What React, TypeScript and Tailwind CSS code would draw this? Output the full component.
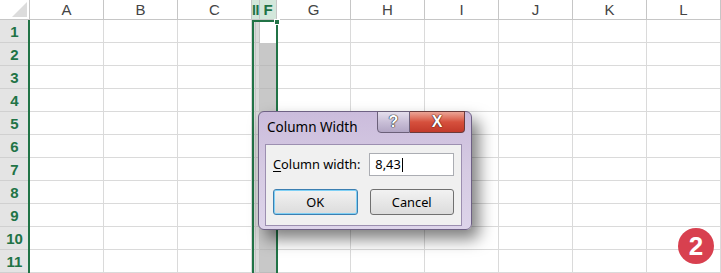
import React from "react";

const COLS = ["", "A", "B", "C", "D", "E", "F", "G", "H", "I", "J", "K", "L"];
const ROWS = [1, 2, 3, 4, 5, 6, 7, 8, 9, 10, 11];

function HeaderRow() {
  return (
    <>
      <div className="relative bg-white border-r border-b border-[#c6c6c6]">
        <svg className="absolute right-[2px] bottom-[2px]" width="15" height="15" viewBox="0 0 15 15">
          <polygon points="15,0 15,15 0,15" fill="#dcdcdc" />
        </svg>
      </div>
      {COLS.slice(1).map((c, i) => {
        if (c === "D") {
          return (
            <div
              key={c}
              className="col-span-2 flex items-center justify-center bg-[#d3e7db] border-r border-b border-[#c6c6c6] text-[#217346] font-bold text-[14px] leading-none"
            >
              <span className="tracking-[-0.5px] whitespace-nowrap">II</span>
            </div>
          );
        }
        if (c === "E") return null;
        if (c === "F") {
          return (
            <div
              key={c}
              className="flex items-center justify-center bg-[#d3e7db] border-r border-b border-[#c6c6c6] text-[#217346] font-bold text-[15px] leading-none"
            >
              F
            </div>
          );
        }
        return (
          <div
            key={c + i}
            className="flex items-center justify-center bg-white border-r border-b border-[#c6c6c6] text-[#444444] text-[15px] leading-none"
          >
            {c}
          </div>
        );
      })}
    </>
  );
}

function BodyRow({ r }: { r: number }) {
  return (
    <>
      <div className="flex items-center justify-center bg-[#e4e4e4] border-r border-b border-[#d0d0d0] text-[#217346] font-bold text-[15px] leading-none">
        {r}
      </div>
      {COLS.slice(1).map((c) => {
        let cls = "border-r border-b border-[#dadada] bg-white";
        if (c === "D" || c === "E") cls = "border-r border-b border-[#c4c4c4] bg-[#d9d9d9]";
        if (c === "F") cls = r === 1 ? "border-b border-white bg-white" : "border-r border-b border-[#bcbcbc] bg-[#c8c8c8]";
        return <div key={c} className={cls} />;
      })}
    </>
  );
}

function Dialog() {
  return (
    <div className="absolute left-[258px] top-[111px] w-[214px] h-[119px] rounded-[6px] border border-[#6e6184] bg-gradient-to-b from-[#cbbcdc] via-[#d6cbe3] to-[#ddd4ea] shadow-[7px_9px_16px_rgba(0,0,0,0.5)] flex flex-col">
      <div className="relative h-[32px] shrink-0 flex items-start">
        <div className="pl-[8px] pt-[9px] text-[13.5px] leading-none text-black font-['Noto_Sans',sans-serif]">
          Column Width
        </div>
        <div className="absolute left-[118px] top-[-1px] flex">
          <div className="w-[33px] h-[22px] rounded-bl-[4px] border border-[#6b6079] bg-gradient-to-b from-[#e4deec] via-[#c9bfd7] to-[#b2a6c4] flex items-center justify-center">
            <span className="text-white font-bold text-[16px] leading-none font-['Liberation_Sans',sans-serif] [text-shadow:0_0_1px_#222,0_0_1px_#222,0_0_1px_#222]">?</span>
          </div>
          <div className="w-[55px] h-[22px] rounded-br-[4px] border border-l-0 border-[#6b3a3a] bg-gradient-to-b from-[#eaa496] via-[#d6503d] to-[#c2392a] flex items-center justify-center">
            <span className="text-white font-bold text-[16px] leading-none font-['Liberation_Sans',sans-serif] [text-shadow:0_0_1px_#4a1a14,0_0_1px_#4a1a14,0_0_1px_#4a1a14]">X</span>
          </div>
        </div>
      </div>
      <div className="ml-[6px] mr-[9px] h-[82px] border border-[#9c8fb0] bg-[#f0f0f0] flex flex-col px-[7px] pt-[8px] font-['Noto_Sans',sans-serif] text-[12.8px] text-black">
        <div className="flex items-center h-[23px]">
          <span className="w-[98px] leading-none">
            <span className="underline underline-offset-2">C</span>olumn width:
          </span>
          <div className="w-[86px] h-[23px] border border-[#abadb3] bg-white flex items-center pl-[5px] leading-none">
            8,43<span className="inline-block w-px h-[14px] bg-black ml-px" />
          </div>
        </div>
        <div className="flex mt-[13px] gap-[12px]">
          <div className="w-[85px] h-[26px] rounded-[3px] border border-[#3c7fb1] shadow-[inset_0_0_0_1px_#7fd0f5] bg-gradient-to-b from-[#f2f2f2] to-[#dcdcdc] flex items-center justify-center leading-none">
            OK
          </div>
          <div className="w-[85px] h-[26px] rounded-[3px] border border-[#707070] bg-gradient-to-b from-[#f2f2f2] to-[#dcdcdc] flex items-center justify-center leading-none">
            Cancel
          </div>
        </div>
      </div>
    </div>
  );
}

export default function App() {
  return (
    <div className="relative w-[721px] h-[273px] overflow-hidden bg-white font-['Liberation_Sans',sans-serif]">
      <div className="grid grid-cols-[30px_74px_74px_74px_4px_4px_17px_74px_74px_74px_74px_74px_74px] grid-rows-[20px_repeat(11,23px)]">
        <HeaderRow />
        {ROWS.map((r) => (
          <BodyRow key={r} r={r} />
        ))}
      </div>
      <div className="absolute left-[28px] top-[20px] w-[2px] h-[253px] bg-[#217346]" />
      <div className="absolute left-[252px] top-[20px] w-[26px] h-[260px] border-2 border-[#217346]" />
      <div className="absolute left-[274px] top-[19px] w-[6px] h-[6px] bg-[#217346] border border-white" />
      <Dialog />
      <div className="absolute left-[678px] top-[228px] w-[36px] h-[36px] rounded-full bg-[#d8404f] flex items-center justify-center text-white font-bold text-[26px] leading-none font-['Liberation_Sans',sans-serif]">
        2
      </div>
    </div>
  );
}
